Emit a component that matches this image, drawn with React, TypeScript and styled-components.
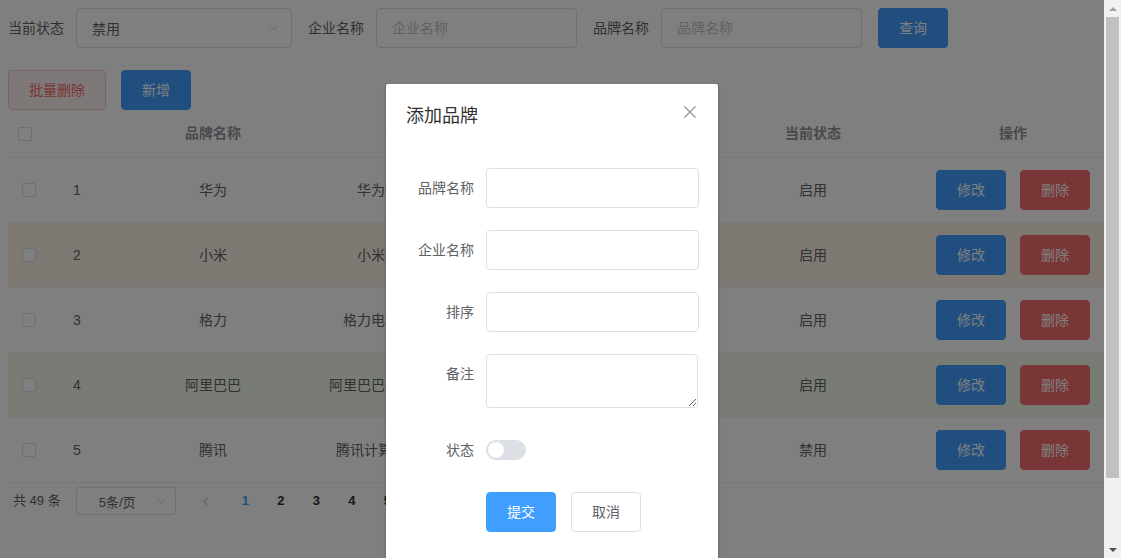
import React from "react";
import styled, { createGlobalStyle, css } from "styled-components";
import { ChevronDown, ChevronLeft } from "lucide-react";

const GlobalStyle = createGlobalStyle`
  html, body, #root {
    margin: 0;
    height: 100%;
  }
  body {
    overflow: hidden;
    background: #fff;
    color: #606266;
    font-family: "Liberation Sans", "Noto Sans CJK SC", sans-serif;
    font-size: 14px;
  }
  * {
    box-sizing: border-box;
  }
`;

type Brand = {
  id: number;
  name: string;
  company: string;
  ordered: number;
  status: string;
  tone?: "warning" | "success";
};

const brands: Brand[] = [
  { id: 1, name: "华为", company: "华为技术有限公司", ordered: 100, status: "启用" },
  { id: 2, name: "小米", company: "小米科技有限公司", ordered: 50, status: "启用", tone: "warning" },
  { id: 3, name: "格力", company: "格力电器股份有限公司", ordered: 30, status: "启用" },
  { id: 4, name: "阿里巴巴", company: "阿里巴巴网络技术有限公司", ordered: 10, status: "启用", tone: "success" },
  { id: 5, name: "腾讯", company: "腾讯计算机系统有限公司", ordered: 20, status: "禁用" },
];

const COLS = "55px 50px 200px 200px 200px 200px 200px";

const App = () => {
  return (
    <>
      <GlobalStyle />
      <Root>
        <Page>
          <SearchForm>
            <FormItem>
              <Label>当前状态</Label>
              <SelectBox $w={216}>
                <span>禁用</span>
                <ChevronDown size={14} color="#c0c4cc" strokeWidth={1.5} />
              </SelectBox>
            </FormItem>
            <FormItem>
              <Label>企业名称</Label>
              <Input $w={201} placeholder="企业名称" />
            </FormItem>
            <FormItem>
              <Label>品牌名称</Label>
              <Input $w={201} placeholder="品牌名称" />
            </FormItem>
            <Button type="button" $kind="primary">查询</Button>
          </SearchForm>

          <Toolbar>
            <Button type="button" $kind="dangerPlain">批量删除</Button>
            <Button type="button" $kind="primary">新增</Button>
          </Toolbar>

          <TableWrap>
            <HeadRow>
              <Cell $pad={10}><Checkbox /></Cell>
              <Cell $pad={10} />
              <Cell $center>品牌名称</Cell>
              <Cell $center>企业名称</Cell>
              <Cell $center>排序</Cell>
              <Cell $center>当前状态</Cell>
              <Cell $center>操作</Cell>
            </HeadRow>
            {brands.map((b) => (
              <BodyRow key={b.id} $tone={b.tone}>
                <Cell $pad={14}><Checkbox /></Cell>
                <Cell $pad={10}>{b.id}</Cell>
                <Cell $center>{b.name}</Cell>
                <Cell $center>{b.company}</Cell>
                <Cell $center>{b.ordered}</Cell>
                <Cell $center>{b.status}</Cell>
                <Cell $center>
                  <Actions>
                    <Button type="button" $kind="primary">修改</Button>
                    <Button type="button" $kind="danger">删除</Button>
                  </Actions>
                </Cell>
              </BodyRow>
            ))}
          </TableWrap>

          <Pagination>
            <Total>共 49 条</Total>
            <SizeSelect>
              <span>5条/页</span>
              <ChevronDown size={13} color="#c0c4cc" strokeWidth={1.5} />
            </SizeSelect>
            <PrevBtn>
              <ChevronLeft size={13} color="#c0c4cc" strokeWidth={2} />
            </PrevBtn>
            <PagerList>
              {["1", "2", "3", "4", "5", "6", "···", "10"].map((n) => (
                <PagerItem key={n} $active={n === "1"}>{n}</PagerItem>
              ))}
            </PagerList>
          </Pagination>

          <Overlay />

          <Dialog>
            <DialogHeader>
              <DialogTitle>添加品牌</DialogTitle>
              <CloseBtn>
                <svg width="16" height="16" viewBox="0 0 16 16">
                  <path d="M2.5 2.5 L13.5 13.5 M13.5 2.5 L2.5 13.5" stroke="#909399" strokeWidth="1.2" fill="none" />
                </svg>
              </CloseBtn>
            </DialogHeader>
            <DialogBody>
              <DialogItem>
                <DialogLabel>品牌名称</DialogLabel>
                <DialogInput />
              </DialogItem>
              <DialogItem>
                <DialogLabel>企业名称</DialogLabel>
                <DialogInput />
              </DialogItem>
              <DialogItem>
                <DialogLabel>排序</DialogLabel>
                <DialogInput />
              </DialogItem>
              <DialogItem>
                <DialogLabel>备注</DialogLabel>
                <TextArea />
              </DialogItem>
              <DialogItem>
                <DialogLabel>状态</DialogLabel>
                <SwitchWrap>
                  <Switch />
                </SwitchWrap>
              </DialogItem>
              <DialogItem>
                <DialogLabel />
                <DialogButtons>
                  <Button type="button" $kind="submit">提交</Button>
                  <Button type="button" $kind="default">取消</Button>
                </DialogButtons>
              </DialogItem>
            </DialogBody>
          </Dialog>
        </Page>

        <ScrollBar>
          <ScrollButton $dir="up" $color="#a3a3a3" />
          <Track>
            <Thumb />
          </Track>
          <ScrollButton $dir="down" $color="#505050" />
        </ScrollBar>
      </Root>
    </>
  );
};

export default App;

const Root = styled.div`
  display: flex;
  height: 100%;
  overflow: hidden;
`;

const Page = styled.div`
  flex: 1;
  position: relative;
  padding: 8px 0 0 8px;
  overflow: hidden;
`;

const SearchForm = styled.div`
  display: flex;
  align-items: center;
  height: 40px;
  margin-bottom: 22px;
`;

const FormItem = styled.div`
  display: flex;
  align-items: center;
  margin-right: 16px;
`;

const Label = styled.label`
  padding-right: 12px;
  line-height: 40px;
  color: #606266;
`;

const fieldBox = css<{ $w: number }>`
  width: ${(p) => p.$w}px;
  height: 40px;
  border: 1px solid #dcdfe6;
  border-radius: 4px;
  background: #fff;
  padding: 0 15px;
  font: inherit;
  color: #606266;
`;

const SelectBox = styled.div<{ $w: number }>`
  ${fieldBox};
  display: flex;
  align-items: center;
  justify-content: space-between;
  padding-right: 10px;
`;

const Input = styled.input<{ $w: number }>`
  ${fieldBox};
  outline: none;
  &::placeholder {
    color: #c0c4cc;
  }
`;

const buttonKinds = {
  primary: css`
    background: #409eff;
    border-color: #409eff;
    color: #fff;
  `,
  submit: css`
    background: #409eff;
    border-color: #409eff;
    color: #fff;
  `,
  danger: css`
    background: #f56c6c;
    border-color: #f56c6c;
    color: #fff;
  `,
  dangerPlain: css`
    background: #fef0f0;
    border-color: #fbc4c4;
    color: #f56c6c;
  `,
  default: css`
    background: #fff;
    border-color: #dcdfe6;
    color: #606266;
  `,
};

const Button = styled.button<{ $kind: keyof typeof buttonKinds }>`
  height: 40px;
  padding: 0 20px;
  border: 1px solid;
  border-radius: 4px;
  font-family: inherit;
  font-size: 14px;
  line-height: 38px;
  white-space: nowrap;
  cursor: pointer;
  ${(p) => buttonKinds[p.$kind]};
`;

const Toolbar = styled.div`
  display: flex;
  gap: 15px;
  height: 40px;
`;

const TableWrap = styled.div`
  width: 1096px;
  overflow: hidden;
  background: #fff;
`;

const Row = styled.div`
  display: grid;
  grid-template-columns: ${COLS};
  width: 1105px;
  border-bottom: 1px solid #ebeef5;
`;

const HeadRow = styled(Row)`
  height: 48px;
  color: #909399;
  font-weight: bold;
`;

const toneBg = {
  warning: "#fdf5e6",
  success: "#f0f9eb",
};

const BodyRow = styled(Row)<{ $tone?: "warning" | "success" }>`
  height: 65px;
  background: ${(p) => (p.$tone ? toneBg[p.$tone] : "#fff")};
`;

const Cell = styled.div<{ $center?: boolean; $pad?: number }>`
  display: flex;
  align-items: center;
  justify-content: ${(p) => (p.$center ? "center" : "flex-start")};
  padding: 0 10px;
  padding-left: ${(p) => (p.$pad !== undefined ? p.$pad : 10)}px;
  white-space: nowrap;
  line-height: 23px;
`;

const Checkbox = styled.span`
  display: inline-block;
  width: 14px;
  height: 14px;
  border: 1px solid #dcdfe6;
  border-radius: 2px;
  background: #fff;
`;

const Actions = styled.div`
  display: flex;
  gap: 14px;
`;

const Pagination = styled.div`
  display: flex;
  align-items: center;
  height: 28px;
  margin-top: 4px;
  padding: 0 5px;
  font-size: 13px;
  color: #606266;
`;

const Total = styled.span`
  margin-right: 15px;
  line-height: 28px;
`;

const SizeSelect = styled.div`
  width: 100px;
  height: 28px;
  border: 1px solid #dcdfe6;
  border-radius: 3px;
  display: flex;
  align-items: center;
  justify-content: space-between;
  padding: 0 7px 0 22px;
  background: #fff;
`;

const PrevBtn = styled.div`
  width: 40px;
  height: 28px;
  margin: 0 2px 0 10px;
  display: flex;
  align-items: center;
  justify-content: center;
`;

const PagerList = styled.ul`
  display: flex;
  margin: 0;
  padding: 0;
  list-style: none;
`;

const PagerItem = styled.li<{ $active?: boolean }>`
  min-width: 35.5px;
  height: 28px;
  line-height: 28px;
  text-align: center;
  font-weight: bold;
  color: ${(p) => (p.$active ? "#409eff" : "#303133")};
`;

const Overlay = styled.div`
  position: absolute;
  inset: 0;
  background: rgba(0, 0, 0, 0.5);
`;

const Dialog = styled.div`
  position: absolute;
  top: 84px;
  left: 50%;
  transform: translateX(-50%);
  width: 332px;
  background: #fff;
  border-radius: 2px;
  box-shadow: 0 1px 3px rgba(0, 0, 0, 0.3);
`;

const DialogHeader = styled.div`
  display: flex;
  justify-content: space-between;
  align-items: flex-start;
  padding: 20px 20px 10px;
`;

const DialogTitle = styled.span`
  font-size: 18px;
  line-height: 24px;
  color: #303133;
`;

const CloseBtn = styled.span`
  width: 16px;
  height: 16px;
  display: flex;
`;

const DialogBody = styled.div`
  padding: 30px 20px;
`;

const DialogItem = styled.div`
  display: flex;
  margin-bottom: 22px;
`;

const DialogLabel = styled.label`
  width: 80px;
  flex-shrink: 0;
  padding-right: 12px;
  text-align: right;
  line-height: 40px;
  color: #606266;
`;

const DialogInput = styled.input`
  flex: 1;
  height: 40px;
  border: 1px solid #dcdfe6;
  border-radius: 4px;
  outline: none;
  padding: 0 15px;
  font: inherit;
`;

const TextArea = styled.textarea`
  flex: 1;
  height: 54px;
  border: 1px solid #dcdfe6;
  border-radius: 4px;
  outline: none;
  padding: 5px 15px;
  font: inherit;
  resize: vertical;
  display: block;
`;

const SwitchWrap = styled.div`
  height: 40px;
  display: flex;
  align-items: center;
`;

const Switch = styled.span`
  position: relative;
  width: 40px;
  height: 20px;
  border-radius: 10px;
  background: #dcdfe6;
  border: 1px solid #dcdfe6;

  &::after {
    content: "";
    position: absolute;
    top: 1px;
    left: 1px;
    width: 16px;
    height: 16px;
    border-radius: 50%;
    background: #fff;
  }
`;

const DialogButtons = styled.div`
  display: flex;
  gap: 15px;
`;

const ScrollBar = styled.div`
  width: 17px;
  flex-shrink: 0;
  background: #f1f1f1;
  display: flex;
  flex-direction: column;
`;

const ScrollButton = styled.div<{ $dir: "up" | "down"; $color: string }>`
  height: 17px;
  display: flex;
  align-items: center;
  justify-content: center;

  &::after {
    content: "";
    border-left: 4px solid transparent;
    border-right: 4px solid transparent;
    ${(p) =>
      p.$dir === "up"
        ? `border-bottom: 4px solid ${p.$color};`
        : `border-top: 4px solid ${p.$color};`}
  }
`;

const Track = styled.div`
  flex: 1;
  padding: 0 2px;
`;

const Thumb = styled.div`
  height: 461px;
  background: #c1c1c1;
`;
